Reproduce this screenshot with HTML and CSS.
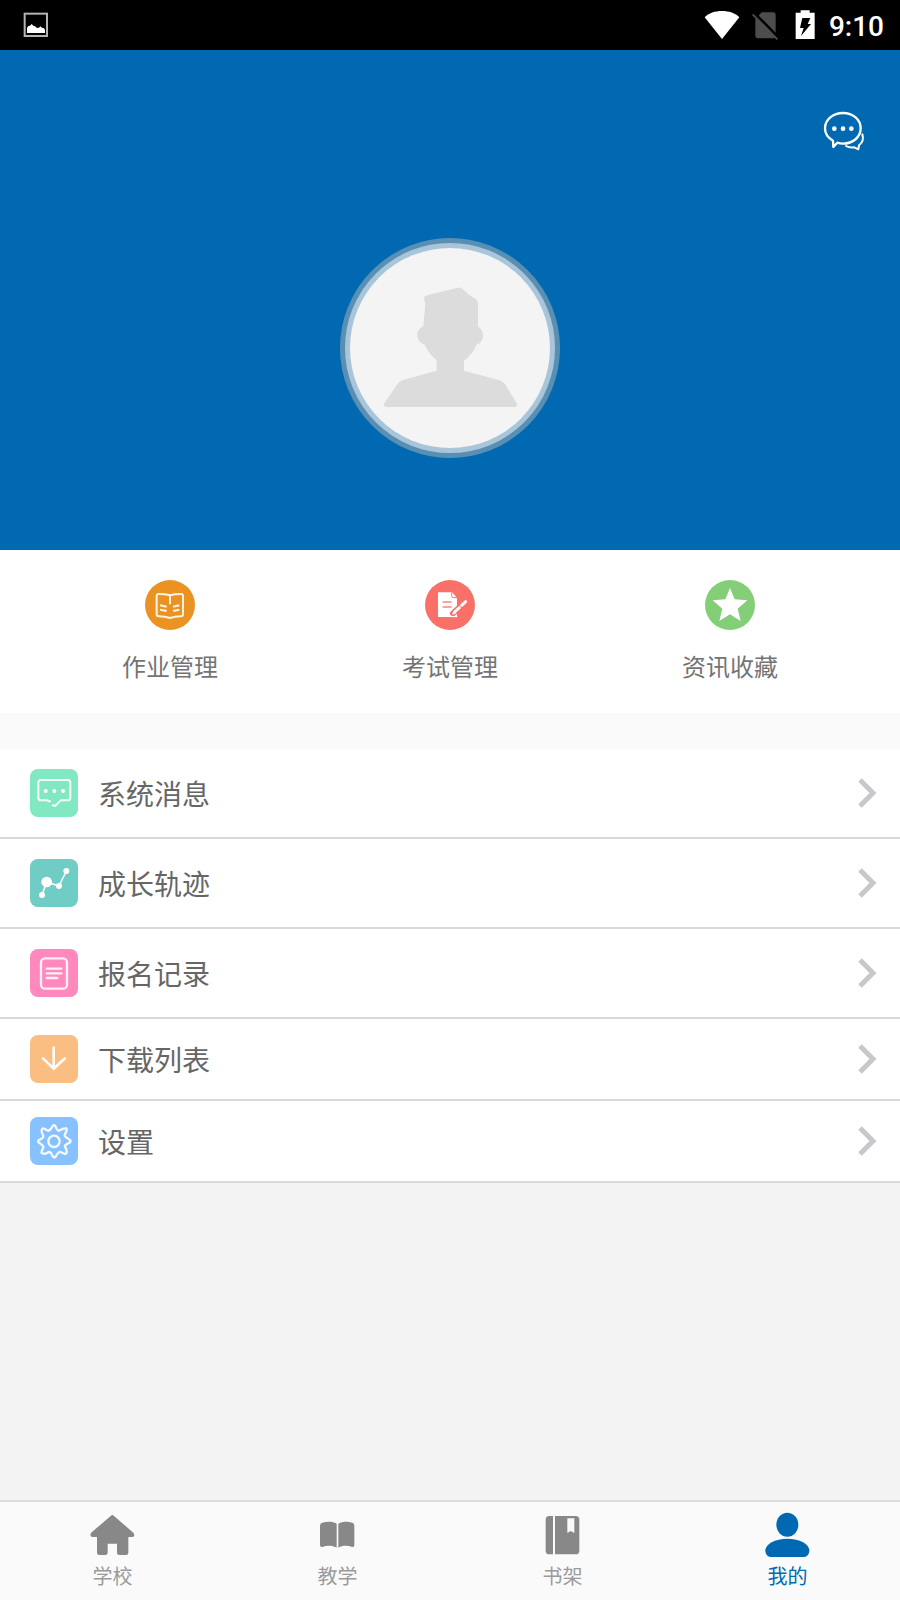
FILE: index.html
```html
<!DOCTYPE html>
<html lang="zh-CN">
<head>
<meta charset="utf-8">
<meta name="viewport" content="width=device-width, initial-scale=1">
<title>我的</title>
<link rel="stylesheet" href="styles.css">
</head>
<body>
<div class="app">
  <div class="status">
    <svg class="status-picture" width="26" height="26" viewBox="0 0 78 78" aria-hidden="true">
      <rect x="5" y="5" width="67" height="67" fill="none" stroke="#b4b4b4" stroke-width="6"/>
      <path d="M12 63V48l4-6 5-1 5-5 5 5 5 2 6 5 6-1 4-4 5 4 6 2 3 5v9z" fill="#fff"/>
    </svg>
    <div class="status-right">
      <svg width="36" height="30" viewBox="0 0 108 90" aria-hidden="true">
        <path d="M54 87 2 22C14 9 33 3 54 3s40 6 52 19z" fill="#fff"/>
      </svg>
      <svg width="27" height="30" viewBox="0 0 81 90" aria-hidden="true">
        <path d="M10 28 29 7h35q7 0 7 7v64q0 7-7 7H17q-7 0-7-7z" fill="#4d4d4d"/>
        <path d="m7 9 74 75" stroke="#000" stroke-width="8"/>
        <path d="m2 13 74 75" stroke="#4d4d4d" stroke-width="6"/>
      </svg>
      <svg class="battery" width="20" height="30" viewBox="0 0 60 90" aria-hidden="true">
        <path d="M2 8h15V1h27v7h15v79H2z" fill="#fff"/>
        <path d="M22 24h24l-8 18h10L18 78l8-24H15z" fill="#000"/>
      </svg>
      <time class="clock">9:10</time>
    </div>
  </div>

  <header class="hero">
    <button class="chat" type="button" aria-label="消息">
      <svg width="42" height="40" viewBox="399 333 126 120" aria-hidden="true">
        <g fill="none" stroke="#fff" stroke-width="7" stroke-linejoin="round" stroke-linecap="round">
          <path d="M429 422c-15-8-24-21-24-37 0-26 24-46 54-46s53 20 53 46-23 46-53 46c-7 0-12-1-17-3l-12 13z"/>
          <path d="M517 403c4 12 1 24-10 33l-2 12-12-6c-9 1-18 0-25-4" stroke-width="6"/>
        </g>
        <g fill="#fff"><circle cx="433" cy="386" r="7"/><circle cx="459" cy="386" r="7"/><circle cx="484" cy="386" r="7"/></g>
      </svg>
    </button>
    <div class="avatar">
      <svg width="200" height="200" viewBox="60 54 600 600" role="img" aria-label="头像">
        <path d="M282 208q-1-9 9-12l93-23q9-1 15 5l18 16 20 13q7 6 7 15v68c21 9 21 46-5 55-7 19-19 33-37 47v30l104 28q12 3 19 12l36 59q2 10-7 10H168q-9-1-5-11l38-56q7-10 18-14l101-28v-31c-16-14-27-28-36-47-29-9-29-46-4-55l6-68z" fill="#dcdcdc"/>
      </svg>
    </div>
  </header>

  <nav class="quick" aria-label="快捷入口">
    <a class="quick-item" href="#homework">
      <svg width="50" height="50" viewBox="0 0 150 150" aria-hidden="true">
        <circle cx="75" cy="75" r="75" fill="#ea9322"/>
        <g fill="none" stroke="#fff3df" stroke-width="6" stroke-linejoin="round">
          <path d="M75 46c-12-3-24-4-34-4q-6 0-6 6v55q0 6 6 6c12 0 23 1 34 5 11-4 22-5 33-5q6 0 6-6V48q0-6-6-6c-10 0-22 1-33 4z"/>
          <path d="M75 46v27m-30 3 20 4m-20 9 20 4m19-13 19-4m-19 17 19-4"/>
        </g>
      </svg>
      <span>作业管理</span>
    </a>
    <a class="quick-item" href="#exam">
      <svg width="50" height="50" viewBox="0 0 150 150" aria-hidden="true">
        <circle cx="75" cy="75" r="75" fill="#f97068"/>
        <path d="M39 37h42l15 16v58H39z" fill="#fff"/>
        <path d="M80 37v10q0 6 6 6h10" fill="none" stroke="#f97068" stroke-width="3"/>
        <path d="M53 66h27M53 81h27" stroke="#fba39e" stroke-width="6"/>
        <path d="m84 100 38-35" stroke="#f97068" stroke-width="18" stroke-linecap="round"/>
        <path d="m89 96 14-13m7-7 12-11" stroke="#fff" stroke-width="9" stroke-linecap="round"/>
        <path d="m82 104 2-11 9 8z" fill="#fff"/>
        <path d="M75 110h22" stroke="#fff" stroke-width="3"/>
      </svg>
      <span>考试管理</span>
    </a>
    <a class="quick-item" href="#favorites">
      <svg width="50" height="50" viewBox="0 0 150 150" aria-hidden="true">
        <circle cx="75" cy="75" r="75" fill="#84ce78"/>
        <path d="m75 24 14 34 38 3-29 25 9 37-32-20-32 20 9-37-29-25 38-3z" fill="#fff"/>
      </svg>
      <span>资讯收藏</span>
    </a>
  </nav>

  <nav class="menu" aria-label="功能列表">
    <a class="row" href="#messages">
      <svg width="48" height="48" viewBox="0 0 144 144" aria-hidden="true">
        <rect width="144" height="144" rx="24" fill="#82e8c1"/>
        <path d="M60 97h-4l-4-3H33q-8 0-8-8V41q0-8 8-8h80q8 0 8 8v45q0 8-8 8H93l-18 17-7-2" fill="none" stroke="#f1fff9" stroke-width="6" stroke-linecap="round" stroke-linejoin="round"/>
        <g fill="#fff"><circle cx="47" cy="66" r="6"/><circle cx="73" cy="66" r="6"/><circle cx="99" cy="66" r="6"/></g>
      </svg>
      <span class="row-label">系统消息</span>
      <svg class="chevron" width="20" height="32" viewBox="0 0 20 32" aria-hidden="true"><path d="m3 3 13 13L3 29"/></svg>
    </a>
    <a class="row" href="#growth">
      <svg width="48" height="48" viewBox="0 0 144 144" aria-hidden="true">
        <rect width="144" height="144" rx="24" fill="#70cdc5"/>
        <path d="m36 108 14-39 37 12 22-45" fill="none" stroke="#f3ffff" stroke-width="5"/>
        <g fill="#fff"><circle cx="36" cy="108" r="9"/><circle cx="50" cy="69" r="16"/><circle cx="87" cy="81" r="9"/><circle cx="109" cy="36" r="9"/></g>
      </svg>
      <span class="row-label">成长轨迹</span>
      <svg class="chevron" width="20" height="32" viewBox="0 0 20 32" aria-hidden="true"><path d="m3 3 13 13L3 29"/></svg>
    </a>
    <a class="row" href="#enroll">
      <svg width="48" height="48" viewBox="0 0 144 144" aria-hidden="true">
        <rect width="144" height="144" rx="24" fill="#ff88bd"/>
        <g fill="none" stroke="#fff0f7" stroke-width="7" stroke-linecap="round">
          <rect x="33" y="28" width="78" height="91" rx="12"/>
          <path d="M50 59h44M50 73h44M50 87h32"/>
        </g>
      </svg>
      <span class="row-label">报名记录</span>
      <svg class="chevron" width="20" height="32" viewBox="0 0 20 32" aria-hidden="true"><path d="m3 3 13 13L3 29"/></svg>
    </a>
    <a class="row row-compact" href="#downloads">
      <svg width="48" height="48" viewBox="0 0 144 144" aria-hidden="true">
        <rect width="144" height="144" rx="24" fill="#fabe83"/>
        <path d="M71 38v63M39 70l32 31 34-31" fill="none" stroke="#fffaf3" stroke-width="8" stroke-linecap="round" stroke-linejoin="round"/>
      </svg>
      <span class="row-label">下载列表</span>
      <svg class="chevron" width="20" height="32" viewBox="0 0 20 32" aria-hidden="true"><path d="m3 3 13 13L3 29"/></svg>
    </a>
    <a class="row row-compact" href="#settings">
      <svg width="48" height="48" viewBox="0 0 144 144" aria-hidden="true">
        <rect width="144" height="144" rx="24" fill="#87c1ff"/>
        <g fill="none" stroke="#f3f9ff" stroke-width="7" stroke-linejoin="round">
          <path d="M68 27Q72 22 76 27C80 36 82 43 88 41 94 38 96 35 105 34Q111 33 110 39C109 48 103 51 104 56 107 62 114 64 120 69Q124 73 119 77C110 81 103 83 105 89 108 95 111 97 110 106Q109 112 103 110C95 108 92 103 88 105 82 108 80 114 76 120Q72 123 68 118C64 109 62 103 56 105 50 108 48 111 39 110Q33 109 35 103C37 95 42 93 40 89 38 83 31 81 26 76Q22 72 27 69C36 65 42 62 40 56 37 50 34 48 35 39Q36 33 42 35C50 37 52 43 56 41 62 38 64 36 68 27z"/>
          <circle cx="72" cy="73" r="17"/>
        </g>
      </svg>
      <span class="row-label">设置</span>
      <svg class="chevron" width="20" height="32" viewBox="0 0 20 32" aria-hidden="true"><path d="m3 3 13 13L3 29"/></svg>
    </a>
  </nav>

  <nav class="tabs" aria-label="主导航">
    <a class="tab" href="#school">
      <svg width="44" height="44" viewBox="92 99 132 132" aria-hidden="true"><path d="M156 105q3 0 5 3l58 50q3 3 3 8 0 5-6 5h-12v47q0 7-7 7h-20q-7 0-7-7v-27h-28v27q0 7-7 7h-18q-7 0-7-7v-47H97q-7 0-7-6 0-4 4-8l57-49q3-3 5-3z"/></svg>
      <span>学校</span>
    </a>
    <a class="tab" href="#teaching">
      <svg width="44" height="44" viewBox="768 99 132 132" aria-hidden="true"><path d="M780 137q0-7 7-9c16-4 32-3 43 3v72c-14-7-28-7-43-2q-7 1-7-5zM835 131c12-6 26-7 42-3q6 2 6 9v59q0 6-6 5c-15-5-29-5-42 2z"/></svg>
      <span>教学</span>
    </a>
    <a class="tab" href="#bookshelf">
      <svg width="44" height="44" viewBox="122 99 132 132" aria-hidden="true"><path d="M147 108h11v115h-11q-11 0-11-11v-93q0-11 11-11zM164 108h62q11 0 11 11v93q0 11-11 11h-62z"/><path d="M201 115h21v44l-11-6-10 6z" fill="#fafafa"/></svg>
      <span>书架</span>
    </a>
    <a class="tab tab-active" href="#me" aria-current="page">
      <svg width="44" height="44" viewBox="797 99 132 132" aria-hidden="true"><ellipse cx="861" cy="134" rx="33" ry="36"/><path d="M810 231c-9-1-15-9-15-20 0-18 29-35 66-35s66 17 66 35c0 11-6 19-15 20z"/></svg>
      <span>我的</span>
    </a>
  </nav>
</div>
</body>
</html>
```
FILE: styles.css
```css
* {
  box-sizing: border-box;
}

body {
  margin: 0;
  background: #f3f3f3;
  font-family: "Noto Sans CJK SC", sans-serif;
}

a {
  color: inherit;
  text-decoration: none;
}

svg {
  display: block;
  flex: none;
  overflow: visible;
}

.app {
  display: flex;
  flex-direction: column;
  min-height: 100vh;
}

.status {
  display: flex;
  align-items: center;
  justify-content: space-between;
  height: 50px;
  padding: 0 16px 0 23px;
  background: #000;
}

.status-right {
  display: flex;
  align-items: center;
  gap: 12px;
}

.battery {
  margin: 0 2px 0 4px;
}

.clock {
  padding-top: 3px;
  color: #fff;
  font: 500 28px/32px Roboto, sans-serif;
}

.hero {
  display: flex;
  flex-direction: column;
  padding: 61px 35px 92px;
  background: #0069b1;
}

.chat {
  align-self: flex-end;
  padding: 0;
  border: 0;
  background: none;
  cursor: pointer;
}

.avatar {
  align-self: center;
  margin-top: 87px;
  padding: 5px;
  border: 5px solid #5a8fb4;
  border-radius: 50%;
  background: #a9c5da;
}

.avatar svg {
  border-radius: 50%;
  background: #f4f4f4;
}

.quick {
  display: grid;
  grid-template-columns: repeat(3, 1fr);
  padding: 30px 30px 29px;
  background: #fff;
}

.quick-item {
  display: flex;
  flex-direction: column;
  align-items: center;
  gap: 18px;
  color: #747474;
  font-size: 24px;
  line-height: 36px;
}

.menu {
  border-top: 36px solid #fafafa;
}

.row {
  display: flex;
  align-items: center;
  gap: 20px;
  padding: 20px 23px 20px 30px;
  border-bottom: 2px solid #d9d9d9;
  background: #fff;
}

.row-compact {
  padding-top: 16px;
  padding-bottom: 16px;
}

.row-label {
  flex: 1;
  color: #666;
  font-size: 28px;
  line-height: 40px;
}

.chevron {
  fill: none;
  stroke: #c7c7cc;
  stroke-width: 5px;
}

.tabs {
  display: grid;
  grid-template-columns: repeat(4, 1fr);
  margin-top: auto;
  padding: 11px 0 9px;
  border-top: 2px solid #dcdcdc;
  background: #fafafa;
}

.tab {
  display: flex;
  flex-direction: column;
  align-items: center;
  gap: 4px;
  color: #9b9b9b;
  font-size: 20px;
  line-height: 30px;
}

.tab svg {
  fill: #888;
}

.tab-active {
  color: #0069b1;
}

.tab-active svg {
  fill: #0069b1;
}
```
